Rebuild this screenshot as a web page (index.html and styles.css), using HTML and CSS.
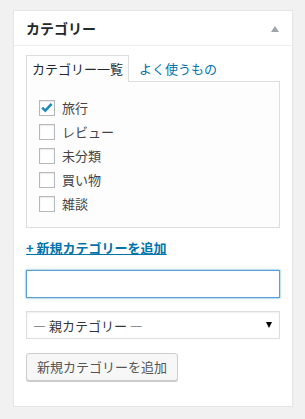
FILE: index.html
```html
<!DOCTYPE html>
<html lang="ja">
<head>
<meta charset="utf-8">
<link rel="stylesheet" href="styles.css">
</head>
<body>
<div class="postbox">
  <div class="hndle">
    <h2 class="title">カテゴリー</h2>
    <span class="toggle"></span>
  </div>
  <div class="inside">
    <ul class="tabs">
      <li class="tab active">カテゴリー一覧</li>
      <li class="tab">よく使うもの</li>
    </ul>
    <div class="tabs-panel">
      <ul class="checklist">
        <li class="item"><span class="cb checked"><svg viewBox="0 0 16 16" width="16" height="16"><path d="M3.2 7.6 L6.3 10.7 L12.6 3.8" fill="none" stroke="#1e8cbe" stroke-width="2.6" stroke-linecap="butt" stroke-linejoin="miter"/></svg></span><span class="lbl">旅行</span></li>
        <li class="item"><span class="cb"></span><span class="lbl">レビュー</span></li>
        <li class="item"><span class="cb"></span><span class="lbl">未分類</span></li>
        <li class="item"><span class="cb"></span><span class="lbl">買い物</span></li>
        <li class="item"><span class="cb"></span><span class="lbl">雑談</span></li>
      </ul>
    </div>
    <div class="adder"><a class="add-link" href="#">+ 新規カテゴリーを追加</a></div>
    <div class="field"><input class="text-input" type="text"></div>
    <div class="select"><span class="select-text">— 親カテゴリー —</span><span class="select-arrow"></span></div>
    <div class="btn-row"><button class="button" type="button">新規カテゴリーを追加</button></div>
  </div>
</div>
</body>
</html>
```

FILE: styles.css
```css
* { box-sizing: border-box; }
html, body { margin: 0; padding: 0; }
body {
  background: #f1f1f1;
  padding: 10px 12px 0 13px;
  font-family: "Noto Sans CJK JP", "Noto Sans", sans-serif;
  font-size: 13px;
  color: #444;
}
.postbox {
  background: #fff;
  border: 1px solid #e5e5e5;
  box-shadow: 0 1px 1px rgba(0,0,0,.04);
}
.hndle {
  display: flex;
  align-items: center;
  justify-content: space-between;
  height: 35px;
  border-bottom: 1px solid #eee;
  padding: 0 13px 0 12px;
}
.title {
  margin: 0;
  font-size: 14px;
  font-weight: 600;
  line-height: 34px;
  color: #23282d;
}
.toggle {
  width: 0;
  height: 0;
  border-left: 4px solid transparent;
  border-right: 4px solid transparent;
  border-bottom: 6px solid #a0a5aa;
  margin-top: 1px;
}
.inside {
  padding: 9px 12px 25px;
}
.tabs {
  list-style: none;
  margin: 0;
  padding: 0;
  display: flex;
  gap: 4px;
  position: relative;
  z-index: 1;
  margin-bottom: -1px;
}
.tab {
  height: 27px;
  line-height: 26px;
  padding: 0 5px;
  color: #0073aa;
  border: 1px solid transparent;
  border-bottom: 0;
}
.tab.active {
  color: #23282d;
  background: #fdfdfd;
  border-color: #ddd;
}
.tabs-panel {
  border: 1px solid #ddd;
  background: #fdfdfd;
  padding: 14px 12px 11px;
}
.checklist {
  list-style: none;
  margin: 0;
  padding: 0;
}
.item {
  height: 24px;
  display: flex;
  align-items: center;
  gap: 7px;
}
.cb {
  width: 16px;
  height: 16px;
  border: 1px solid #b4b9be;
  background: #fff;
  box-shadow: inset 0 1px 2px rgba(0,0,0,.1);
  position: relative;
  flex: none;
}
.cb svg {
  position: absolute;
  left: -1px;
  top: -1px;
}
.lbl { line-height: 24px; }
.adder {
  margin-top: 10px;
  line-height: 20px;
}
.add-link {
  color: #0073aa;
  font-weight: 600;
  text-decoration: underline;
}
.field { margin-top: 12px; }
.text-input {
  display: block;
  width: 100%;
  height: 28px;
  margin: 0;
  border: 1px solid #5b9dd9;
  box-shadow: 0 0 2px rgba(30,140,190,.8);
  background: #fff;
  outline: none;
}
.select {
  margin-top: 13px;
  height: 28px;
  border: 1px solid #ddd;
  background: #fff;
  box-shadow: inset 0 1px 2px rgba(0,0,0,.07);
  display: flex;
  align-items: center;
  justify-content: space-between;
  padding: 0 7px 0 6px;
  color: #32373c;
}
.select-arrow {
  width: 0;
  height: 0;
  border-left: 3px solid transparent;
  border-right: 3px solid transparent;
  border-top: 6px solid #000;
}
.btn-row { margin-top: 14px; }
.button {
  height: 28px;
  padding: 0 10px;
  margin: 0;
  border: 1px solid #ccc;
  border-radius: 3px;
  background: #f7f7f7;
  box-shadow: 0 1px 0 #ccc;
  color: #555;
  font-family: inherit;
  font-size: 13px;
  line-height: 26px;
}
```
